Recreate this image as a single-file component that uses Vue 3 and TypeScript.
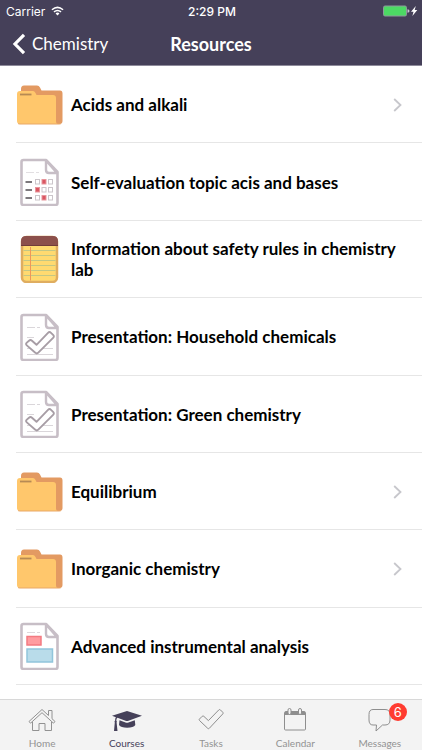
<script setup lang="ts">
type ResourceKind = 'folder' | 'survey' | 'note' | 'presentation' | 'page'
type TabName = 'Home' | 'Courses' | 'Tasks' | 'Calendar' | 'Messages'

interface Resource {
  title: string
  kind: ResourceKind
}

interface Tab {
  name: TabName
  badge?: number
}

const resources: Resource[] = [
  { title: 'Acids and alkali', kind: 'folder' },
  { title: 'Self-evaluation topic acis and bases', kind: 'survey' },
  { title: 'Information about safety rules in chemistry lab', kind: 'note' },
  { title: 'Presentation: Household chemicals', kind: 'presentation' },
  { title: 'Presentation: Green chemistry', kind: 'presentation' },
  { title: 'Equilibrium', kind: 'folder' },
  { title: 'Inorganic chemistry', kind: 'folder' },
  { title: 'Advanced instrumental analysis', kind: 'page' },
]

const tabs: Tab[] = [
  { name: 'Home' },
  { name: 'Courses' },
  { name: 'Tasks' },
  { name: 'Calendar' },
  { name: 'Messages', badge: 6 },
]

const activeTab: TabName = 'Courses'
const surveyRows = [
  { y: 24, checked: 1 },
  { y: 32, checked: 0 },
  { y: 40, checked: 1 },
]
</script>

<template>
  <div class="screen">
    <header class="top">
      <div class="status">
        <span class="carrier">
          Carrier
          <svg class="wifi" viewBox="0 0 14 10" aria-hidden="true">
            <path d="M1 3.6Q7-1.4 13 3.6M3.2 6Q7 2.8 10.8 6" fill="none" stroke="#fff" stroke-width="1.6" />
            <path d="M4.9 7.6Q7 5.8 9.1 7.6L7 9.8Z" fill="#fff" />
          </svg>
        </span>
        <span class="clock">2:29 PM</span>
        <span class="power">
          <svg viewBox="0 0 36 12" aria-hidden="true">
            <rect x="1.5" y="1" width="23" height="10" rx="1.5" fill="#4cd964" stroke="#8d9a9b" />
            <path d="M25.5 4.2q2 .2 2 1.8t-2 1.8z" fill="#c7c5cf" />
            <path d="M33.8 1L29 6.8h2.5L30.4 11l4.9-6h-2.6z" fill="#fff" />
          </svg>
        </span>
      </div>
      <nav class="bar">
        <button class="back" type="button">
          <svg viewBox="0 0 14 22" aria-hidden="true">
            <path d="M12 1.8L3 11l9 9.2" fill="none" stroke="#fff" stroke-width="3.2" />
          </svg>
          Chemistry
        </button>
        <h1>Resources</h1>
      </nav>
    </header>

    <main class="list">
      <a v-for="item in resources" :key="item.title" class="row" href="#">
        <svg class="icon" viewBox="0 0 46 48" aria-hidden="true">
          <g v-if="item.kind === 'folder'">
            <path d="M4 8q0-3.5 3-3.5h13q2 0 3 2l1.5 3H43q2.5 0 2.5 3V40q0 3-3 3H20L4 14z" fill="#e39a62" />
            <path d="M0 13q0-3 3-3h13q1.5 0 2.5 2l1 2H36q3 0 3 3v23q0 3 2 3H3q-3 0-3-3z" fill="#ffc76c" />
            <path d="M1 42.5q.8.5 2 .5h39q1.5 0 2-.5" fill="none" stroke="#e9a866" />
            <path d="M3 13.5h11.5" stroke="#b78a54" stroke-width="1.8" />
          </g>
          <g v-else-if="item.kind === 'note'">
            <rect x="5" y="2" width="35" height="45" rx="4.5" fill="#ffda70" stroke="#dfad60" stroke-width="2.5" />
            <path d="M4 11V6q0-5 5-5h27q5 0 5 5v5z" fill="#8c504b" />
            <path d="M4 10.5h37" stroke="#713c3a" />
            <path d="M6.5 15.5h32M6.5 20.5h32M6.5 25.5h32M6.5 30.5h32M6.5 35.5h32M6.5 40.5h32" stroke="#c3c785" />
            <path d="M13.5 12v33.5" stroke="#ee975a" />
          </g>
          <g v-else>
            <path d="M6.5 2H29l11.500 12v31q0 2-2 2h-32q-2 0-2-2V4q0-2 2-2z" fill="#fff" stroke="#c7bec6" stroke-width="2.6" stroke-linejoin="round" />
            <path d="M29 2.5V12q0 3 3 3h8z" fill="#fff" stroke="#c7bec6" stroke-width="2.4" stroke-linejoin="round" />
            <g v-if="item.kind === 'survey'">
              <path d="M9 14.5h8M19 14.5h3" stroke="#e2dfe2" />
              <g v-for="line in surveyRows" :key="line.y">
                <path :d="`M8.5 ${line.y}h6.5`" stroke="#5c575c" stroke-width="1.6" />
                <rect
                  v-for="box in [0, 1, 2]"
                  :key="box"
                  :x="18.5 + box * 6.5"
                  :y="line.y - 2.5"
                  width="4"
                  height="4.5"
                  :fill="box === line.checked ? '#d95662' : '#fff'"
                  :stroke="box === line.checked ? '#e8959b' : '#cbc5ca'"
                />
              </g>
            </g>
            <g v-else-if="item.kind === 'presentation'">
              <path d="M10 14.5h8M20 14.5h3M10 24.5h7M10 30.5h5M10 35.5h26M10 41.500h26" stroke="#dad6da" />
              <path d="M9.8 29.600l2.200-1.900q1.500-1.300 3 0l4.500 4.100L31 19.800q1.500-1.500 3 0l2.100 2.100q1.500 1.500 0 3L21.300 39.700q-1.500 1.500-3 0l-8.500-7.300q-1.500-1.300 0-2.800z" fill="#fff" stroke="#a79da5" stroke-width="1.9" stroke-linejoin="round" />
            </g>
            <g v-else>
              <path d="M10 10.5h8M20 10.5h3" stroke="#dcd8dc" />
              <rect x="10" y="14.500" width="14" height="8.500" fill="#ff9ca0" stroke="#f37a81" stroke-width="1.5" />
              <rect x="10" y="27" width="25.5" height="13" fill="#b9dcea" stroke="#91c5db" stroke-width="1.5" />
            </g>
          </g>
        </svg>
        <span class="title">{{ item.title }}</span>
        <svg v-if="item.kind === 'folder'" class="chevron" viewBox="0 0 9 14" aria-hidden="true">
          <path d="M1.2 1l6.3 6-6.3 6" fill="none" stroke="#c7c7cc" stroke-width="1.8" />
        </svg>
      </a>
    </main>

    <nav class="tabs">
      <a v-for="tab in tabs" :key="tab.name" :class="['tab', { active: tab.name === activeTab }]" href="#">
        <span class="glyph">
          <svg viewBox="0 0 30 26" aria-hidden="true">
            <g v-if="tab.name === 'Home'" fill="none" stroke="#929292" stroke-linejoin="round">
              <path d="M15 2.5L2 14.5l1.500 1.700L15 5.700l11.500 10.500 1.500-1.700-3-2.800V3.500h-3.500v5z" />
              <path d="M5.500 15v8.500h6.500v-7h6v7h6.500V15" />
            </g>
            <g v-else-if="tab.name === 'Courses'" fill="#454059">
              <path d="M15 4l15 4.800-13.500 4.900q-1.500.5-3 0L5.500 10.800q-1.200.8-1.200 2.700 1 .8.300 2L5.500 24H2l.8-8.500q-.8-1.200.3-2 0-2.200.8-3.300L0 8.800z" />
              <path d="M7.500 13.300l6 2.100q1.500.5 3 0l6.300-2.200.5 4.800q-1.800 2.700-8.100 2.700T7 18z" />
            </g>
            <g v-else-if="tab.name === 'Tasks'" fill="none" stroke="#8e8e8e" stroke-linejoin="round">
              <path d="M3.500 12l2.700-2.700q.8-.8 1.600 0l4.600 4.300L22.800 2.900q.8-.8 1.600 0l2.400 2.400q.8.800 0 1.600L13.300 21.300q-.8.800-1.600 0L3.500 13.500q-.8-.8 0-1.500z" />
            </g>
            <g v-else-if="tab.name === 'Calendar'">
              <rect x="4.500" y="5.500" width="21" height="17.500" rx="1" fill="none" stroke="#8e8e8e" />
              <path d="M4 8q0-4 2-4h18q2 0 2 4z" fill="#8e8e8e" />
              <rect x="8" y="1.500" width="3" height="6" rx="1.500" fill="#f3f3f3" stroke="#8e8e8e" />
              <rect x="18.500" y="1.500" width="3" height="6" rx="1.500" fill="#f3f3f3" stroke="#8e8e8e" />
            </g>
            <path v-else d="M8 2.500h12q5 0 5 5v5.500q0 5-5 5h-2.500L11 24l.5-6H8q-4 0-4-5V7.500q0-5 4-5z" fill="none" stroke="#8e8e8e" stroke-linejoin="round" />
          </svg>
          <span v-if="tab.badge" class="badge">{{ tab.badge }}</span>
        </span>
        <span class="label">{{ tab.name }}</span>
      </a>
    </nav>
  </div>
</template>

<style>
body {
  margin: 0;
  background: #fff;
}
</style>

<style scoped>
.screen {
  display: flex;
  flex-direction: column;
  min-height: 100vh;
  font-family: Lato, "Liberation Sans", sans-serif;
  color: #000;
}

.top {
  background: #454059;
  color: #fff;
  border-bottom: 1px solid #8e8b9b;
}

.status {
  display: grid;
  grid-template-columns: 1fr auto 1fr;
  align-items: center;
  height: 22px;
  padding: 0 4px 0 6px;
  font-family: Inter, "Liberation Sans", sans-serif;
  font-size: 12px;
}

.carrier {
  display: flex;
  align-items: center;
  gap: 6px;
}

.wifi {
  width: 13px;
  height: 10px;
}

.clock {
  font-weight: 500;
}

.power {
  display: flex;
  justify-content: flex-end;
}

.power svg {
  width: 36px;
  height: 12px;
}

.bar {
  display: grid;
  grid-template-columns: 1fr auto 1fr;
  align-items: center;
  height: 43px;
  padding: 0 12px;
}

.back {
  display: flex;
  align-items: center;
  justify-self: start;
  gap: 6px;
  padding: 0;
  border: 0;
  background: none;
  color: inherit;
  font: inherit;
  font-size: 17px;
  line-height: 24px;
  cursor: pointer;
}

.back svg {
  width: 14px;
  height: 22px;
}

h1 {
  margin: 0;
  font-size: 18px;
  font-weight: 700;
  line-height: 24px;
}

.list {
  display: flex;
  flex: 1;
  flex-direction: column;
  padding: 0 0 14px 16px;
}

.row {
  display: flex;
  flex: 1 0 76px;
  align-items: center;
  gap: 8px;
  box-sizing: border-box;
  padding: 1px 20px 0 1px;
  border-bottom: 1px solid #e6e6e6;
  color: inherit;
  text-decoration: none;
}

.icon {
  flex: none;
  width: 46px;
  height: 48px;
}

.title {
  flex: 1;
  font-size: 17px;
  font-weight: 700;
  line-height: 21px;
}

.chevron {
  flex: none;
  width: 9px;
  height: 14px;
}

.tabs {
  display: grid;
  grid-template-columns: repeat(5, 1fr);
  height: 50px;
  border-top: 1px solid #d8d8d8;
  background: #f3f3f3;
}

.tab {
  display: flex;
  flex-direction: column;
  align-items: center;
  gap: 3px;
  padding-top: 7px;
  color: #929292;
  font-size: 10px;
  line-height: 14px;
  text-decoration: none;
}

.active {
  color: #454059;
}

.glyph {
  position: relative;
  height: 26px;
}

.glyph svg {
  display: block;
  width: 30px;
  height: 26px;
}

.badge {
  position: absolute;
  top: -4px;
  left: 24px;
  width: 18px;
  height: 18px;
  border-radius: 9px;
  background: #ff3b30;
  color: #fff;
  font-family: Inter, "Liberation Sans", sans-serif;
  font-size: 13px;
  line-height: 18px;
  text-align: center;
}
</style>
